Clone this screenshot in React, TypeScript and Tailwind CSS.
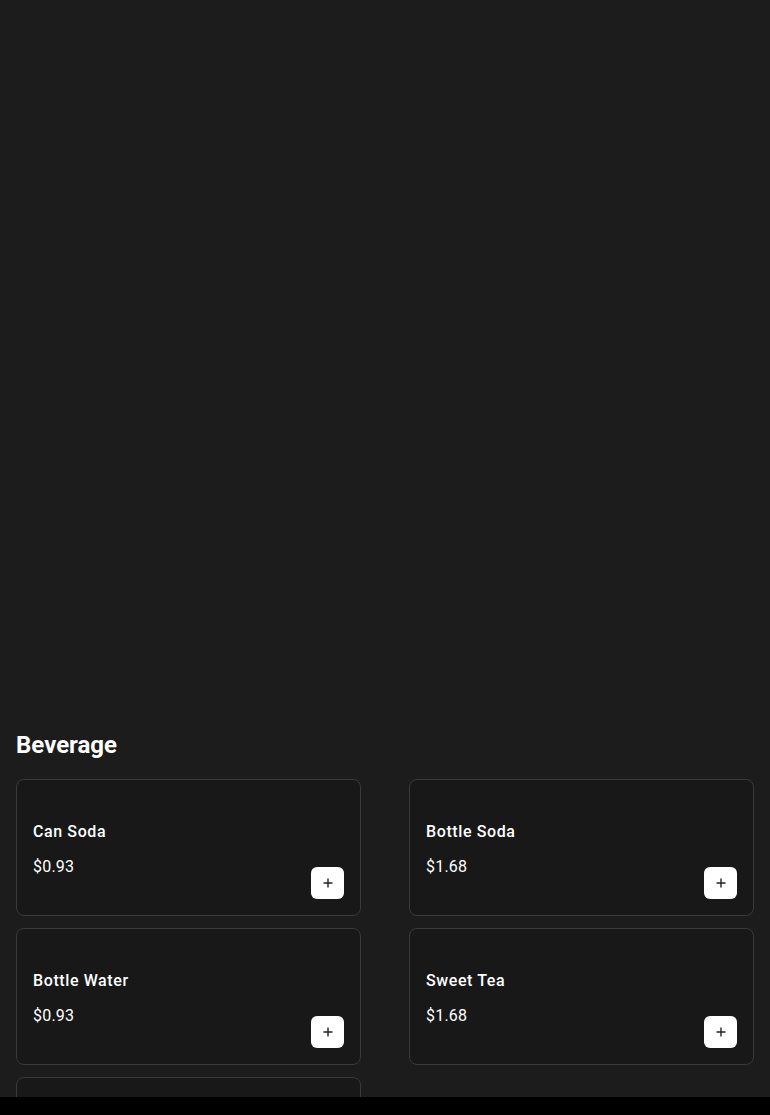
import React from 'react'

type Item = { name: string; price: string }

const items: Item[] = [
  { name: 'Can Soda', price: '$0.93' },
  { name: 'Bottle Soda', price: '$1.68' },
  { name: 'Bottle Water', price: '$0.93' },
  { name: 'Sweet Tea', price: '$1.68' },
  { name: 'Lemonade', price: '$1.68' },
]

const ItemCard: React.FC<{ item: Item }> = ({ item }) => {
  return (
    <div className="h-[137px] rounded-lg border border-[#3a3a3a] bg-[#181818] p-4 flex justify-between">
      <div className="pt-[24px]">
        <h3 className="text-base leading-6 font-medium tracking-[0.6px] text-white">{item.name}</h3>
        <p className="mt-[11px] text-base leading-6 tracking-[0.2px] text-white">{item.price}</p>
      </div>
      <button className="self-end w-[33px] h-[32px] rounded-md bg-white flex items-center justify-center">
        <svg width="10" height="10" viewBox="0 0 10 10" fill="none">
          <path d="M5 0.5v9M0.5 5h9" stroke="#222" strokeWidth="1.4" />
        </svg>
      </button>
    </div>
  )
}

export default function App() {
  return (
    <div className="min-h-screen bg-[#1c1c1c] font-['Roboto',sans-serif]">
      <div className="h-[729px]" />
      <section className="px-4">
        <h2 className="text-2xl leading-8 font-bold text-white mb-[18px]">Beverage</h2>
        <div className="grid grid-cols-2 gap-x-12 gap-y-3 pb-8">
          {items.map((item) => (
            <ItemCard key={item.name} item={item} />
          ))}
        </div>
      </section>
      <div className="fixed bottom-0 left-0 right-0 h-[18px] bg-black" />
    </div>
  )
}
